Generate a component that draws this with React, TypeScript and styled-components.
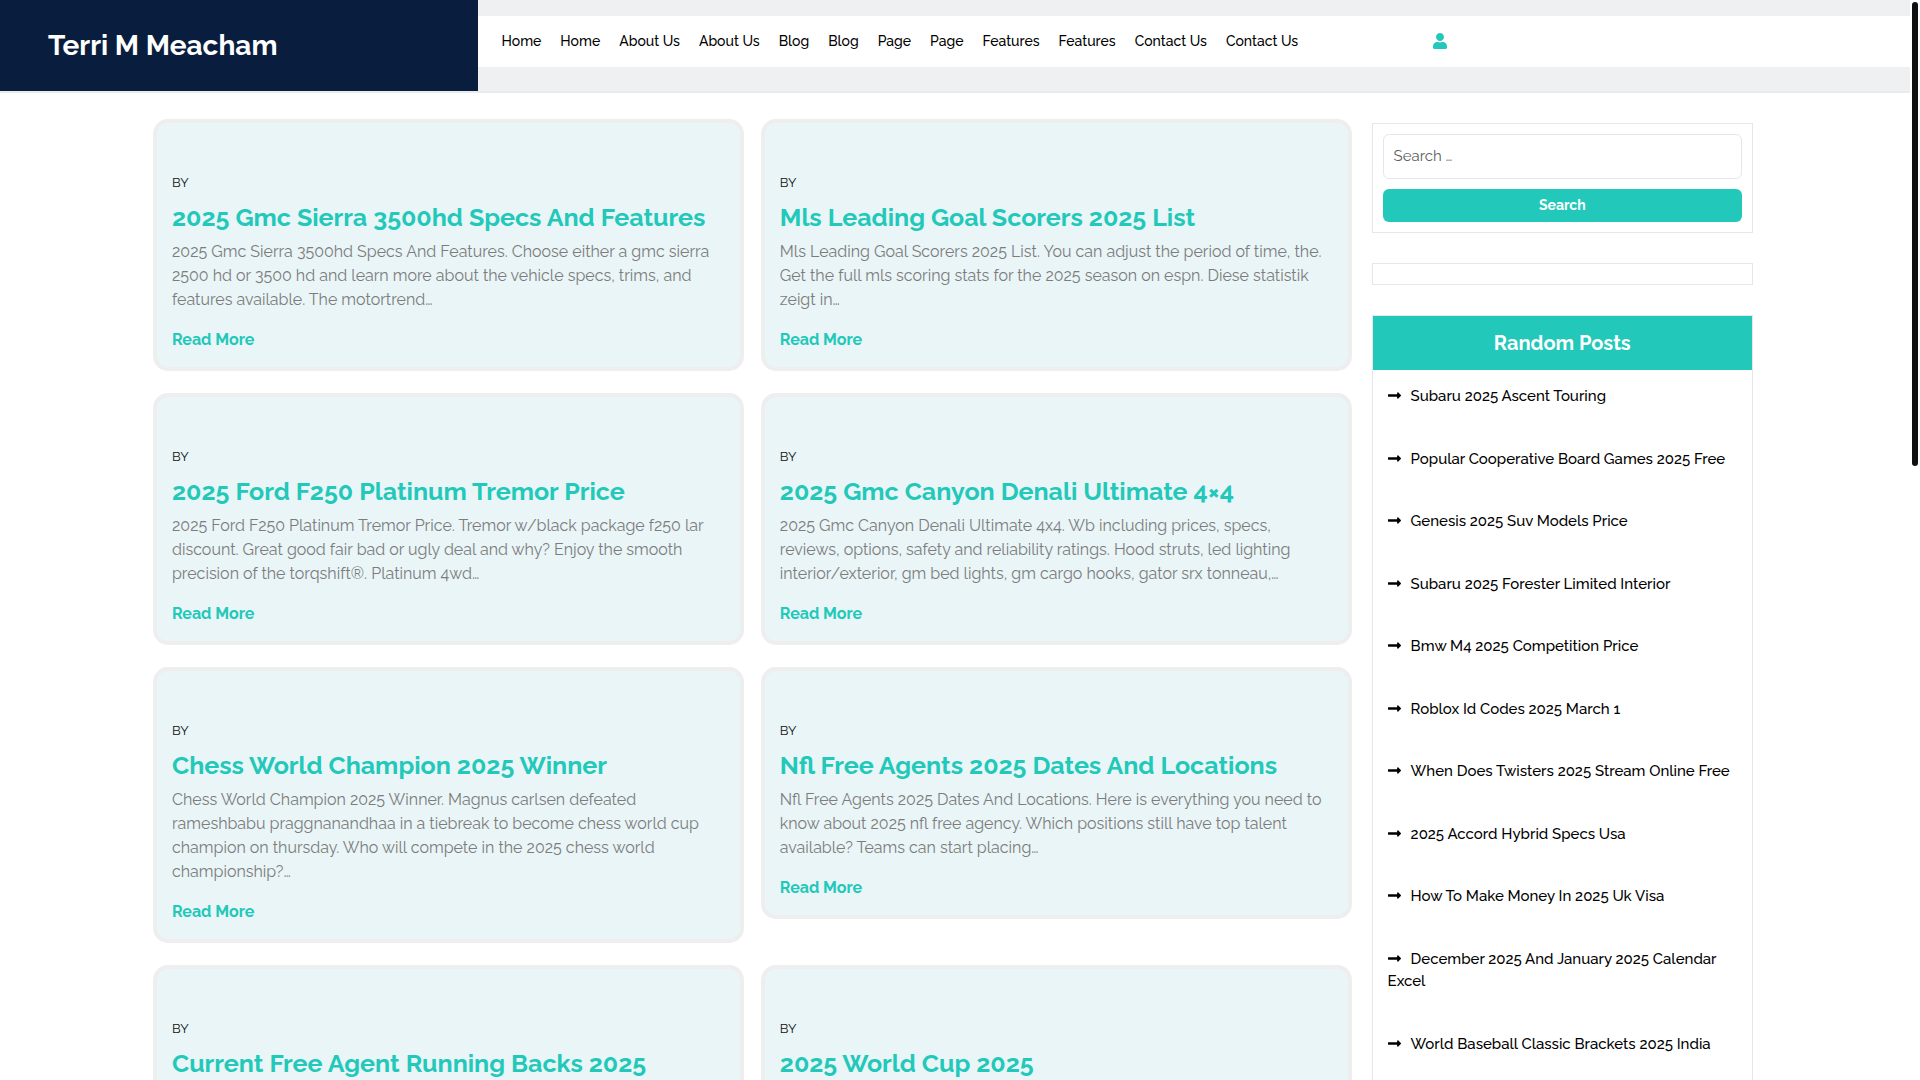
import React from "react";
import styled, { createGlobalStyle } from "styled-components";
import { FaLongArrowAltRight, FaUser } from "react-icons/fa";

const teal = "#22c8b9";
const line = "#e5e7f0";

const GlobalStyle = createGlobalStyle`
  *, *::before, *::after { box-sizing: border-box; }
  body {
    margin: 0;
    background: #fff;
    color: #212529;
    font-family: Raleway, Lato, sans-serif;
    font-size: 16px;
    line-height: 1.5;
  }
  a { text-decoration: none; }
`;

const Page = styled.div`
  height: 100vh;
  overflow: hidden;
  padding-right: 10px;
`;

const ScrollThumb = styled.div`
  position: fixed;
  top: 2px;
  right: 2px;
  width: 6px;
  height: 43vh;
  border-radius: 3px;
  background: #101010;
`;

const Header = styled.header`
  display: grid;
  grid-template-columns: 1fr 3fr;
  background: #eff0f2;
  border-bottom: 2px solid #ebebeb;
`;

const Brand = styled.div`
  padding: 25px 48px 24px;
  background: #091e3e;
`;

const SiteTitle = styled.h1`
  margin: 0;
  font-size: 28px;
  font-weight: 700;
  line-height: 42px;

  a { color: #fff; }
`;

const MenuBar = styled.div`
  display: grid;
  grid-template-columns: 2fr 1fr;
  align-items: center;
  align-self: start;
  height: 51px;
  margin-top: 16px;
  padding-bottom: 1px;
  background: #fff;
`;

const Menu = styled.nav`
  display: flex;
  gap: 19px;
  padding-left: 24px;

  a {
    color: #000;
    font-size: 14px;
    font-weight: 500;
    line-height: 24px;
    white-space: nowrap;
  }
`;

const AccountLink = styled.a`
  display: flex;
  justify-self: start;
  color: ${teal};

  svg {
    width: 14px;
    height: 16px;
  }
`;

const Main = styled.main`
  display: grid;
  grid-template-columns: minmax(0, 22fr) minmax(0, 7fr);
  gap: 20px;
  max-width: 1604px;
  margin: 26px auto 0;
  padding-right: 4px;
`;

const Posts = styled.section`
  display: grid;
  grid-template-columns: repeat(2, minmax(0, 1fr));
  align-items: start;
  align-content: start;
  gap: 22px 17px;
`;

const Card = styled.article`
  min-height: 252px;
  padding: 49px 15px 15px;
  border: 4px solid #eee;
  border-radius: 15px;
  background: #e9f5f7;
`;

const Byline = styled.div`
  margin-bottom: 9px;
  color: #111;
  font-size: 13px;
  line-height: 21px;
  text-transform: uppercase;
`;

const PostTitle = styled.h2`
  margin: 0 0 8px;
  font-size: 25px;
  font-weight: 700;
  line-height: 30px;

  a { color: ${teal}; }
`;

const Excerpt = styled.p`
  margin: 0 0 16px;
  color: #7c7c7c;
  line-height: 24px;
`;

const ReadMore = styled.a`
  display: block;
  color: ${teal};
  font-weight: 700;
  line-height: 24px;
`;

const Sidebar = styled.aside`
  display: flex;
  flex-direction: column;
  gap: 30px;
  padding-top: 4px;
`;

const Widget = styled.section<{ $flush?: boolean }>`
  padding: ${(p) => (p.$flush ? "0" : "10px")};
  border: 1px solid ${line};
`;

const SearchForm = styled.form`
  display: flex;
  flex-direction: column;
  gap: 10px;
`;

const SearchInput = styled.input`
  width: 100%;
  height: 45px;
  padding: 0 10px 2px;
  border: 1px solid ${line};
  border-radius: 6px;
  background: #fff;
  font: 400 15px/22px Raleway, Lato, sans-serif;

  &::placeholder { color: #5c5f63; opacity: 1; }
`;

const SearchButton = styled.button`
  height: 33px;
  border: 0;
  border-radius: 6px;
  background: ${teal};
  color: #fff;
  font: 700 14px/21px Raleway, Lato, sans-serif;
`;

const WidgetTitle = styled.h3`
  margin: 0;
  padding: 15px;
  background: ${teal};
  color: #fff;
  font-size: 20px;
  font-weight: 700;
  line-height: 24px;
  text-align: center;
`;

const PostList = styled.ul`
  display: flex;
  flex-direction: column;
  gap: 40px;
  margin: 0;
  padding: 15px 15px 55px;
  list-style: none;
  font-size: 15px;
  font-weight: 500;

  a { color: #000; }
  svg {
    width: 13px;
    height: 15px;
    margin-right: 10px;
    vertical-align: -2px;
  }
`;

const menuItems = [
  "Home", "Home", "About Us", "About Us", "Blog", "Blog",
  "Page", "Page", "Features", "Features", "Contact Us", "Contact Us",
];

interface Post {
  title: string;
  excerpt?: string;
}

const posts: Post[] = [
  {
    title: "2025 Gmc Sierra 3500hd Specs And Features",
    excerpt:
      "2025 Gmc Sierra 3500hd Specs And Features. Choose either a gmc sierra 2500 hd or 3500 hd and learn more about the vehicle specs, trims, and features available. The motortrend…",
  },
  {
    title: "Mls Leading Goal Scorers 2025 List",
    excerpt:
      "Mls Leading Goal Scorers 2025 List. You can adjust the period of time, the. Get the full mls scoring stats for the 2025 season on espn. Diese statistik zeigt in…",
  },
  {
    title: "2025 Ford F250 Platinum Tremor Price",
    excerpt:
      "2025 Ford F250 Platinum Tremor Price. Tremor w/black package f250 lar discount. Great good fair bad or ugly deal and why? Enjoy the smooth precision of the torqshift®. Platinum 4wd…",
  },
  {
    title: "2025 Gmc Canyon Denali Ultimate 4×4",
    excerpt:
      "2025 Gmc Canyon Denali Ultimate 4x4. Wb including prices, specs, reviews, options, safety and reliability ratings. Hood struts, led lighting interior/exterior, gm bed lights, gm cargo hooks, gator srx tonneau,…",
  },
  {
    title: "Chess World Champion 2025 Winner",
    excerpt:
      "Chess World Champion 2025 Winner. Magnus carlsen defeated rameshbabu praggnanandhaa in a tiebreak to become chess world cup champion on thursday. Who will compete in the 2025 chess world championship?…",
  },
  {
    title: "Nfl Free Agents 2025 Dates And Locations",
    excerpt:
      "Nfl Free Agents 2025 Dates And Locations. Here is everything you need to know about 2025 nfl free agency. Which positions still have top talent available? Teams can start placing…",
  },
  { title: "Current Free Agent Running Backs 2025" },
  { title: "2025 World Cup 2025" },
];

const randomPosts = [
  "Subaru 2025 Ascent Touring",
  "Popular Cooperative Board Games 2025 Free",
  "Genesis 2025 Suv Models Price",
  "Subaru 2025 Forester Limited Interior",
  "Bmw M4 2025 Competition Price",
  "Roblox Id Codes 2025 March 1",
  "When Does Twisters 2025 Stream Online Free",
  "2025 Accord Hybrid Specs Usa",
  "How To Make Money In 2025 Uk Visa",
  "December 2025 And January 2025 Calendar Excel",
  "World Baseball Classic Brackets 2025 India",
];

export default function App() {
  return (
    <>
      <GlobalStyle />
      <Page>
        <Header>
          <Brand>
            <SiteTitle><a href="#">Terri M Meacham</a></SiteTitle>
          </Brand>
          <MenuBar>
            <Menu>
              {menuItems.map((item, i) => (
                <a href="#" key={i}>{item}</a>
              ))}
            </Menu>
            <AccountLink href="#" aria-label="My account">
              <FaUser />
            </AccountLink>
          </MenuBar>
        </Header>
        <Main>
          <Posts>
            {posts.map((post) => (
              <Card key={post.title}>
                <Byline>by</Byline>
                <PostTitle><a href="#">{post.title}</a></PostTitle>
                {post.excerpt && (
                  <>
                    <Excerpt>{post.excerpt}</Excerpt>
                    <ReadMore href="#">Read More</ReadMore>
                  </>
                )}
              </Card>
            ))}
          </Posts>
          <Sidebar>
            <Widget>
              <SearchForm role="search" onSubmit={(e) => e.preventDefault()}>
                <SearchInput type="search" placeholder="Search …" aria-label="Search for:" />
                <SearchButton type="submit">Search</SearchButton>
              </SearchForm>
            </Widget>
            <Widget />
            <Widget $flush>
              <WidgetTitle>Random Posts</WidgetTitle>
              <PostList>
                {randomPosts.map((title) => (
                  <li key={title}>
                    <a href="#"><FaLongArrowAltRight />{title}</a>
                  </li>
                ))}
              </PostList>
            </Widget>
          </Sidebar>
        </Main>
      </Page>
      <ScrollThumb />
    </>
  );
}
